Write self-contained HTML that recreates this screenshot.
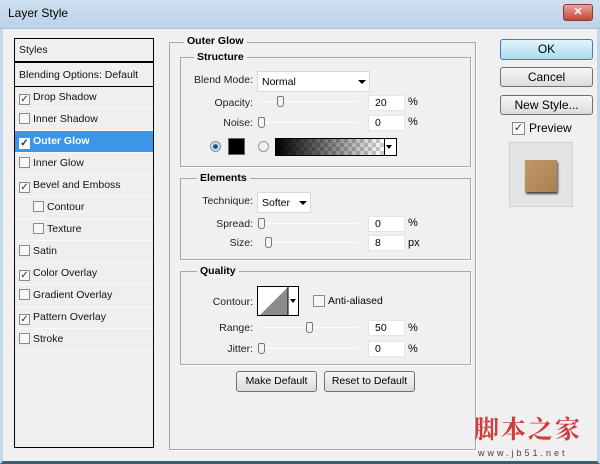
<!DOCTYPE html>
<html><head><meta charset="utf-8"><style>
*{margin:0;padding:0;box-sizing:border-box}
body{width:600px;height:464px;overflow:hidden;background:#f0f0f0;font-family:"Liberation Sans",sans-serif;font-size:11px;color:#000;position:relative}
.a{position:absolute}
.title{left:0;top:0;width:600px;height:29px;background:linear-gradient(#cfe0f0,#bcd2e8);border-bottom:1px solid #a9bfd6}
.frame{left:0;top:29px;width:600px;height:435px;border-left:3px solid #c3d7ea;border-right:3px solid #c3d7ea;border-bottom:3px solid #3b5f72}
.list{left:14px;top:38px;width:140px;height:410px;border:1px solid #000;background:#efefef}
.row{position:absolute;left:0;width:138px;height:22px;line-height:21px;border-bottom:1px solid #fafafa;padding-left:4px;font-size:10.5px;color:#111}
.cb{display:inline-block;width:11px;height:11px;border:1px solid #8a8a8a;background:#f8f8f8;vertical-align:-2px;margin-right:3px;font-size:10px;line-height:9px;text-align:center;color:#333}
.sel{background:#3c95e6;color:#fff;font-weight:bold}
.grp{border:1px solid #a8a8a8;box-shadow:1px 1px 0 #fff}
.leg{position:absolute;background:#f0f0f0;font-weight:bold;padding:0 3px;font-size:10.5px}
.lbl{position:absolute;text-align:right;font-size:10.5px;color:#222}
.inp{position:absolute;background:#fff;border:1px solid #e4e4e4;height:16px;line-height:15px;padding-left:6px;font-size:10.5px}
.sl{position:absolute;height:1px;background:#b0b0b0;border-bottom:1px solid #fff}
.th{position:absolute;width:7px;height:11px;border:1px solid #777;border-radius:2px 2px 3px 3px;background:#f4f4f4}
.btn{position:absolute;border:1px solid #707070;border-radius:3px;background:linear-gradient(#f6f6f6,#dcdcdc);text-align:center;font-size:11px;line-height:18px}
.dd{position:absolute;border:1px solid #d8d8d8;background:#fff;font-size:10.5px;line-height:20px;padding-left:4px}
.tri{position:absolute;width:0;height:0;border-left:4px solid transparent;border-right:4px solid transparent;border-top:4px solid #000}
</style></head><body>
<div class="a title"></div>
<div class="a" style="left:8px;top:6px;font-size:12px;color:#000">Layer Style</div>
<div class="a" style="left:563px;top:4px;width:30px;height:17px;border:1px solid #8c3a36;border-radius:3px;background:linear-gradient(#e8a49a,#c6463a);color:#fff;font-weight:bold;font-size:11px;text-align:center;line-height:15px">✕</div>
<div class="a frame"></div>

<div class="a list">
<div class="row" style="top:0;height:24px;line-height:23px;border-bottom:2px solid #000">Styles</div>
<div class="row" style="top:26px;line-height:20px;border-bottom:1px solid #000;height:22px">Blending Options: Default</div>
<div class="row" style="top:48px"><span class="cb">✓</span>Drop Shadow</div>
<div class="row" style="top:70px"><span class="cb"></span>Inner Shadow</div>
<div class="row sel" style="top:92px"><span class="cb" style="border-color:#fff">✓</span>Outer Glow</div>
<div class="row" style="top:114px"><span class="cb"></span>Inner Glow</div>
<div class="row" style="top:136px"><span class="cb">✓</span>Bevel and Emboss</div>
<div class="row" style="top:158px;padding-left:18px"><span class="cb"></span>Contour</div>
<div class="row" style="top:180px;padding-left:18px"><span class="cb"></span>Texture</div>
<div class="row" style="top:202px"><span class="cb"></span>Satin</div>
<div class="row" style="top:224px"><span class="cb">✓</span>Color Overlay</div>
<div class="row" style="top:246px"><span class="cb"></span>Gradient Overlay</div>
<div class="row" style="top:268px"><span class="cb">✓</span>Pattern Overlay</div>
<div class="row" style="top:290px"><span class="cb"></span>Stroke</div>
</div>

<div class="a grp" style="left:169px;top:42px;width:307px;height:408px"></div>
<div class="leg" style="left:184px;top:35px">Outer Glow</div>

<div class="a grp" style="left:180px;top:57px;width:291px;height:110px"></div>
<div class="leg" style="left:194px;top:51px">Structure</div>
<div class="lbl" style="left:180px;width:73px;top:74px">Blend Mode:</div>
<div class="dd" style="left:257px;top:71px;width:113px;height:21px">Normal</div>
<div class="tri" style="left:358px;top:80px"></div>
<div class="lbl" style="left:180px;width:73px;top:97px">Opacity:</div>
<div class="sl" style="left:261px;top:101px;width:97px"></div><div class="th" style="left:277px;top:96px"></div>
<div class="inp" style="left:368px;top:95px;width:37px">20</div><div class="a" style="left:408px;top:96px">%</div>
<div class="lbl" style="left:180px;width:73px;top:117px">Noise:</div>
<div class="sl" style="left:261px;top:122px;width:97px"></div><div class="th" style="left:258px;top:117px"></div>
<div class="inp" style="left:368px;top:115px;width:37px">0</div><div class="a" style="left:408px;top:116px">%</div>
<div class="a" style="left:210px;top:141px;width:11px;height:11px;border-radius:50%;border:1px solid #7a8a99;background:radial-gradient(#1f4e7a 30%,#9ec7e8 40%,#eaf3fb 70%)"></div>
<div class="a" style="left:228px;top:138px;width:17px;height:17px;border:1px solid #666;background:#000"></div>
<div class="a" style="left:258px;top:141px;width:11px;height:11px;border-radius:50%;border:1px solid #999;background:#f0f0f0"></div>
<div class="a" style="left:275px;top:138px;width:122px;height:18px;border:1px solid #000;background:linear-gradient(90deg,#000,rgba(0,0,0,0) 90%),repeating-conic-gradient(#ccc 0 25%,#fff 0 50%) 0 0/8px 8px"></div>
<div class="a" style="left:384px;top:139px;width:12px;height:16px;background:#fff;border-left:1px solid #000"></div>
<div class="tri" style="left:386px;top:145px;border-left-width:3px;border-right-width:3px"></div>

<div class="a grp" style="left:180px;top:178px;width:291px;height:82px"></div>
<div class="leg" style="left:197px;top:172px">Elements</div>
<div class="lbl" style="left:180px;width:73px;top:195px">Technique:</div>
<div class="dd" style="left:257px;top:192px;width:54px;height:21px">Softer</div>
<div class="tri" style="left:299px;top:201px"></div>
<div class="lbl" style="left:180px;width:73px;top:218px">Spread:</div>
<div class="sl" style="left:261px;top:223px;width:97px"></div><div class="th" style="left:258px;top:218px"></div>
<div class="inp" style="left:368px;top:216px;width:37px">0</div><div class="a" style="left:408px;top:217px">%</div>
<div class="lbl" style="left:180px;width:73px;top:237px">Size:</div>
<div class="sl" style="left:261px;top:242px;width:97px"></div><div class="th" style="left:265px;top:237px"></div>
<div class="inp" style="left:368px;top:235px;width:37px">8</div><div class="a" style="left:408px;top:237px">px</div>

<div class="a grp" style="left:180px;top:271px;width:291px;height:94px"></div>
<div class="leg" style="left:197px;top:265px">Quality</div>
<div class="lbl" style="left:180px;width:73px;top:296px">Contour:</div>
<div class="a" style="left:257px;top:286px;width:42px;height:30px;border:1px solid #000;background:#fff;overflow:hidden">
<svg width="42" height="30"><polygon points="0,30 30,0 30,30" fill="#8c8c8c"/><line x1="30" y1="0" x2="30" y2="30" stroke="#000"/></svg></div>
<div class="tri" style="left:290px;top:299px;border-left-width:3px;border-right-width:3px"></div>
<div class="a cb" style="left:313px;top:295px;width:12px;height:12px"></div>
<div class="a" style="left:328px;top:295px;font-size:10.5px">Anti-aliased</div>
<div class="lbl" style="left:180px;width:73px;top:322px">Range:</div>
<div class="sl" style="left:261px;top:327px;width:97px"></div><div class="th" style="left:306px;top:322px"></div>
<div class="inp" style="left:368px;top:320px;width:37px">50</div><div class="a" style="left:408px;top:322px">%</div>
<div class="lbl" style="left:180px;width:73px;top:343px">Jitter:</div>
<div class="sl" style="left:261px;top:348px;width:97px"></div><div class="th" style="left:258px;top:343px"></div>
<div class="inp" style="left:368px;top:341px;width:37px">0</div><div class="a" style="left:408px;top:343px">%</div>

<div class="btn" style="left:236px;top:371px;width:81px;height:21px;font-size:10.5px">Make Default</div>
<div class="btn" style="left:324px;top:371px;width:91px;height:21px;font-size:10.5px">Reset to Default</div>

<div class="btn" style="left:500px;top:39px;width:93px;height:21px;border-color:#3c7fb1;background:linear-gradient(#e3f5fc,#a9dcef);font-size:12px">OK</div>
<div class="btn" style="left:500px;top:67px;width:93px;height:20px;font-size:12px">Cancel</div>
<div class="btn" style="left:500px;top:95px;width:93px;height:20px;font-size:12px">New Style...</div>
<div class="a cb" style="left:512px;top:122px;width:13px;height:13px;font-size:11px;line-height:11px">✓</div>
<div class="a" style="left:529px;top:121px;font-size:12px">Preview</div>
<div class="a" style="left:509px;top:142px;width:64px;height:65px;background:#e4e4e4;border:1px solid #d0d0d0"></div>
<div class="a" style="left:525px;top:160px;width:32px;height:32px;background:#b38a5a;box-shadow:1px 2px 2px #444;background-image:linear-gradient(135deg,#c19a68,#a87f52)"></div>

<div class="a" style="left:474px;top:410px;font-family:'Noto Serif CJK SC',serif;font-weight:bold;font-size:25px;color:#d23b3b;letter-spacing:2px">脚本之家</div>
<div class="a" style="left:478px;top:448px;font-size:9px;color:#444;letter-spacing:3px">www.jb51.net</div>
</body></html>
